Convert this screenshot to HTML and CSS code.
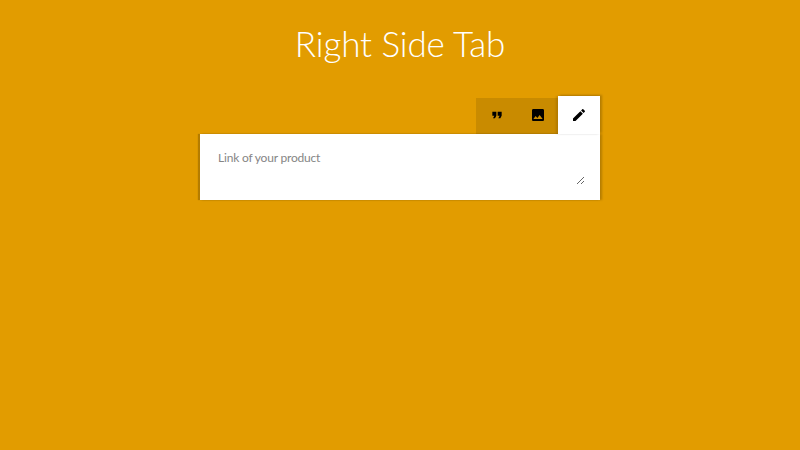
FILE: index.html
```html
<!DOCTYPE html>
<html>
<head>
  <title>Right Side Tab</title>
  <link rel="stylesheet" href="styles.css">
</head>
<body>
  <h1 class="title">Right Side Tab</h1>

  <div class="tabs">
    <ul class="tab-list">
      <li class="tab">
        <svg class="icon" viewBox="0 0 24 24"><path d="M6 17h3l2-4V7H5v6h3zm8 0h3l2-4V7h-6v6h3z"/></svg>
      </li>
      <li class="tab">
        <svg class="icon" viewBox="0 0 24 24"><path d="M21 19V5c0-1.1-.9-2-2-2H5c-1.1 0-2 .9-2 2v14c0 1.100.9 2 2 2h14c1.100 0 2-.9 2-2zM8.500 13.500l2.500 3.010L14.500 12l4.500 6H5l3.500-4.500z"/></svg>
      </li>
      <li class="tab tab-active">
        <svg class="icon" viewBox="0 0 24 24"><path d="M3 17.250V21h3.750L17.810 9.940l-3.750-3.750L3 17.250zM20.710 7.040c.39-.39.39-1.020 0-1.410l-2.340-2.340c-.39-.39-1.020-.39-1.410 0l-1.830 1.830 3.750 3.750 1.830-1.830z"/></svg>
      </li>
    </ul>
    <div class="tab-panel">
      <textarea class="product-input" placeholder="Link of your product"></textarea>
    </div>
  </div>
</body>
</html>
```

FILE: styles.css
```css
body {
  margin: 0;
  height: 450px;
  overflow: hidden;
  background-color: #e29c00;
  font-family: Lato, "Open Sans", sans-serif;
}

.title {
  margin: 0;
  padding-top: 20px;
  height: 96px;
  box-sizing: border-box;
  text-align: center;
  color: #fff;
  font-size: 35px;
  line-height: 46px;
  font-weight: 300;
  letter-spacing: -0.1px;
}

.tabs {
  width: 400px;
  margin: 0 auto;
}

.tab-list {
  display: flex;
  justify-content: flex-end;
  align-items: flex-end;
  margin: 0;
  padding: 0;
  list-style: none;
}

.tab {
  display: flex;
  justify-content: center;
  align-items: center;
  width: 41px;
  height: 36px;
  padding-bottom: 3px;
  box-sizing: border-box;
  background-color: #c98b00;
}

.tab-active {
  width: 42px;
  height: 38px;
  padding-bottom: 1px;
  background-color: #fff;
  box-shadow: 2px -1px 2px rgba(0, 0, 0, 0.2), -2px 0 2px rgba(0, 0, 0, 0.12);
  position: relative;
  z-index: 1;
}

.icon {
  width: 16px;
  height: 16px;
  fill: #000;
}

.tab-panel {
  padding: 15px;
  background-color: #fff;
  box-shadow: 2px 0 2px rgba(0, 0, 0, 0.2), -2px 0 1px rgba(0, 0, 0, 0.2);
  position: relative;
}

.product-input {
  display: block;
  width: 100%;
  height: 36px;
  box-sizing: border-box;
  padding: 0 3px;
  border: none;
  outline: none;
  font-family: Lato, "Open Sans", sans-serif;
  font-size: 12px;
  line-height: 18px;
  letter-spacing: -0.2px;
  color: #858585;
}

.product-input::placeholder {
  color: #858585;
}
```
